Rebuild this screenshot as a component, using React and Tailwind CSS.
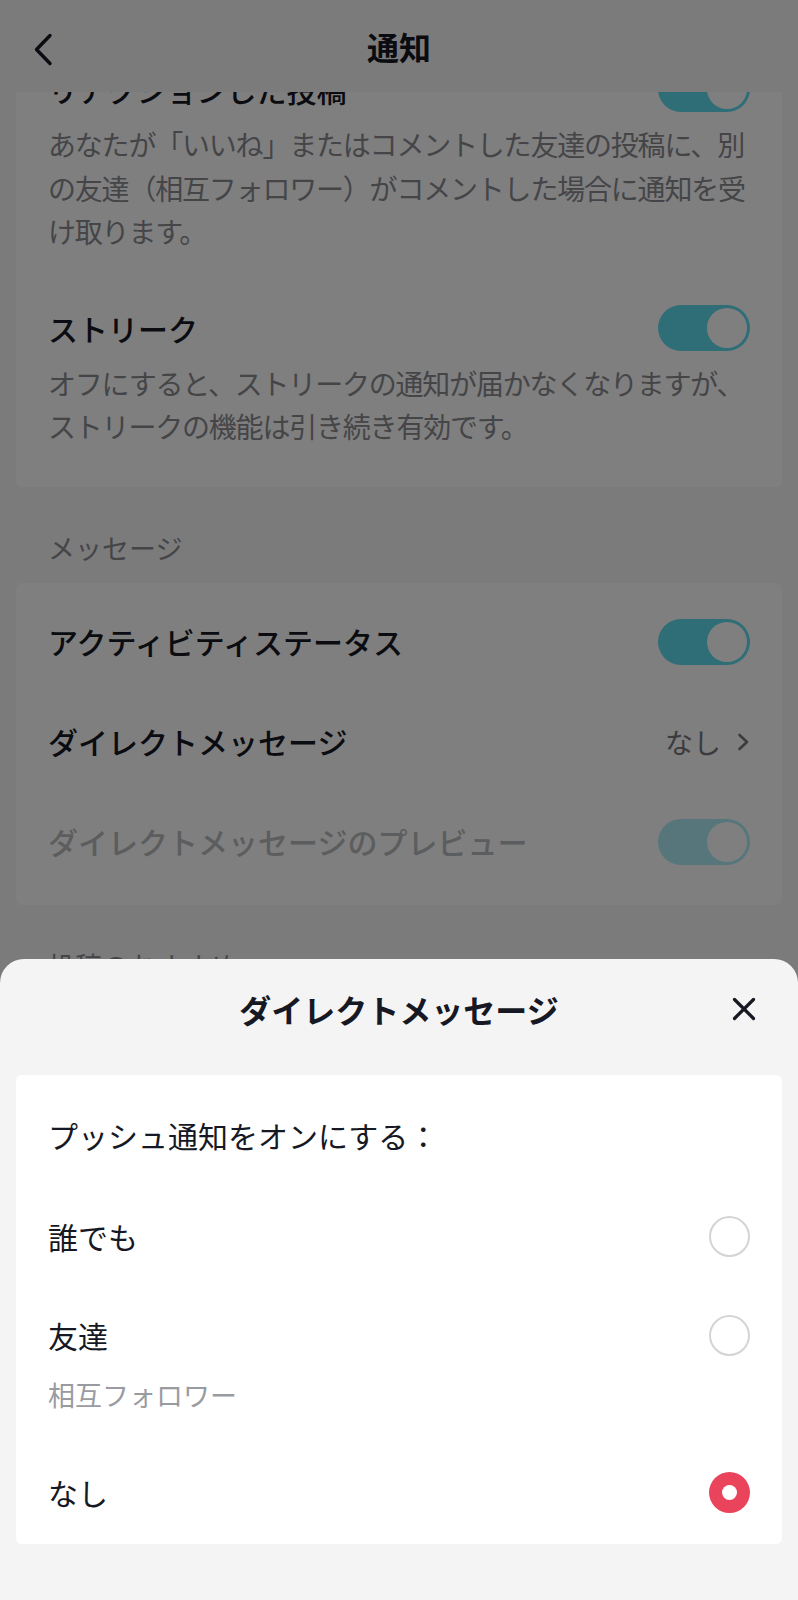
import React from 'react';

const Toggle = ({ disabled }) => (
  <div className={`w-[92px] h-[46px] rounded-full bg-[#5edcee] p-[3px] flex justify-end shrink-0 ${disabled ? 'opacity-50' : ''}`}>
    <div className="w-[40px] h-[40px] rounded-full bg-white"></div>
  </div>
);

const Radio = ({ checked }) =>
  checked ? (
    <div className="w-[41px] h-[41px] rounded-full bg-[#e9445c] flex items-center justify-center shrink-0">
      <div className="w-[15px] h-[15px] rounded-full bg-white"></div>
    </div>
  ) : (
    <div className="w-[41px] h-[41px] rounded-full border-[2.5px] border-[#d3d4d6] shrink-0"></div>
  );

const SettingRow = ({ title, desc }) => (
  <div className="pt-[26px] pb-[25px]">
    <div className="flex items-center justify-between">
      <span className="text-[30px] leading-[44px] font-medium text-[#161823]">{title}</span>
      <Toggle />
    </div>
    <p className="mt-[11px] text-[28px] leading-[43.5px] tracking-[-1.2px] text-[#8a8b91]">{desc}</p>
  </div>
);

export default function App() {
  return (
    <div className="relative w-[798px] h-[1600px] overflow-hidden bg-[#f6f6f6] font-['Noto_Sans_CJK_JP','Noto_Sans',sans-serif]">
      <div className="flex flex-col h-full">
        {/* top bar */}
        <div className="h-[92px] shrink-0 relative flex items-center justify-center bg-[#f6f6f6]">
          <svg className="absolute left-[33px] top-[33px]" width="20" height="33" viewBox="0 0 20 33" fill="none">
            <path d="M17 2.5 L3.5 16.5 L17 30.5" stroke="#161823" strokeWidth="3.4" strokeLinecap="round" strokeLinejoin="round" />
          </svg>
          <span className="text-[32px] leading-[44px] font-bold text-[#161823]">通知</span>
        </div>

        {/* scrolled content */}
        <div className="flex-1 overflow-hidden">
          <div className="-mt-[52px]">
            <div className="mx-4 bg-white rounded-[6px] px-8 pb-[13px]">
              <SettingRow
                title="リアクションした投稿"
                desc="あなたが「いいね」またはコメントした友達の投稿に、別の友達（相互フォロワー）がコメントした場合に通知を受け取ります。"
              />
              <SettingRow
                title="ストリーク"
                desc="オフにすると、ストリークの通知が届かなくなりますが、ストリークの機能は引き続き有効です。"
              />
            </div>

            <div className="mt-[41px] px-12 text-[27px] leading-[40px] text-[#8a8b91]">メッセージ</div>

            <div className="mt-[15px] mx-4 bg-white rounded-[6px] px-8 pt-[9px] pb-[13px]">
              <div className="h-[100px] flex items-center justify-between">
                <span className="text-[30px] font-medium text-[#161823]">アクティビティステータス</span>
                <Toggle />
              </div>
              <div className="h-[100px] flex items-center justify-between">
                <span className="text-[30px] font-medium text-[#161823]">ダイレクトメッセージ</span>
                <div className="flex items-center gap-[16px] text-[#76777d]">
                  <span className="text-[28px]">なし</span>
                  <svg width="13" height="18" viewBox="0 0 13 18" fill="none">
                    <path d="M2.5 2 L10 9 L2.5 16" stroke="#76777d" strokeWidth="2.6" strokeLinecap="round" strokeLinejoin="round" />
                  </svg>
                </div>
              </div>
              <div className="h-[100px] flex items-center justify-between">
                <span className="text-[30px] font-medium text-[#b9babd]">ダイレクトメッセージのプレビュー</span>
                <Toggle disabled />
              </div>
            </div>

            <div className="mt-[41px] px-12 text-[27px] leading-[40px] text-[#8a8b91]">投稿のおすすめ</div>
          </div>
        </div>
      </div>

      {/* dim overlay */}
      <div className="absolute inset-0 bg-black/50"></div>

      {/* bottom sheet */}
      <div className="absolute left-0 right-0 bottom-0 h-[641px] bg-[#f4f4f4] rounded-t-[24px]">
        <div className="h-[100px] grid grid-cols-[1fr_auto_1fr] items-center">
          <div></div>
          <span className="text-[32px] font-bold text-[#161823]">ダイレクトメッセージ</span>
          <div className="flex justify-end pr-[42px]">
            <svg width="24" height="24" viewBox="0 0 24 24" fill="none">
              <path d="M2.5 2.5 L21.5 21.5 M21.5 2.5 L2.5 21.5" stroke="#161823" strokeWidth="3.2" strokeLinecap="round" />
            </svg>
          </div>
        </div>

        <div className="mt-[16px] mx-4 bg-white rounded-[6px] px-8 pb-[30px]">
          <div className="h-[120px] flex items-center">
            <span className="text-[30px] text-[#161823]">プッシュ通知をオンにする：</span>
          </div>
          <div className="pt-[19px] pb-[19px] flex items-center justify-between">
            <span className="text-[30px] leading-[44px] text-[#161823]">誰でも</span>
            <Radio />
          </div>
          <div className="pt-[36px]">
            <div className="flex items-center justify-between">
              <span className="text-[30px] leading-[44px] text-[#161823]">友達</span>
              <Radio />
            </div>
            <div className="mt-[18px] text-[27px] leading-[40px] text-[#9a9ba0]">相互フォロワー</div>
          </div>
          <div className="pt-[55px] flex items-center justify-between">
            <span className="text-[30px] leading-[44px] text-[#161823]">なし</span>
            <Radio checked />
          </div>
        </div>
      </div>
    </div>
  );
}
